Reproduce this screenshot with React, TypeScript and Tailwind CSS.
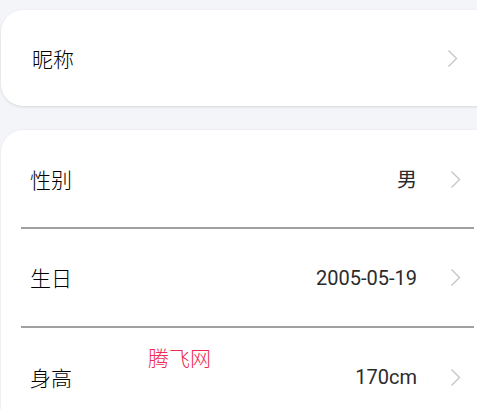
import React from "react";

const font = { fontFamily: 'Roboto, "Noto Sans CJK SC", sans-serif' };
const cjk = { fontFamily: '"Noto Sans CJK SC", sans-serif' };

function Chevron() {
  return (
    <svg width="11" height="19" viewBox="0 0 11 19" className="shrink-0">
      <polyline points="1.5,1.5 9.5,9.5 1.5,17.5" fill="none" stroke="#c6c6c6" strokeWidth="1.4" />
    </svg>
  );
}

function Row({ label, value, h }: { label: string; value: string; h: string }) {
  return (
    <div className={`flex items-center ${h} pl-[29px] pr-[16px]`}>
      <span className="text-[21px] text-black leading-none font-light" style={cjk}>
        {label}
      </span>
      <span className="ml-auto text-[20px] text-[#2b2b2b] leading-none">{value}</span>
      <span className="ml-[33px]">
        <Chevron />
      </span>
    </div>
  );
}

export default function App() {
  return (
    <div className="relative w-full h-[409px] overflow-hidden bg-[#f4f5f9] pt-[10px] pl-[1px]" style={font}>
      <div className="mr-[-20px] h-[96px] rounded-[22px] bg-white shadow-[0_1px_3px_rgba(0,0,0,0.12)] flex items-center pl-[31px] pr-[39px]">
        <span className="text-[21px] text-black leading-none font-light" style={cjk}>
          昵称
        </span>
        <span className="ml-auto">
          <Chevron />
        </span>
      </div>

      <div className="mt-[24px] mr-[-20px] pr-[20px] rounded-tl-[22px] bg-white shadow-[0_0_2px_rgba(0,0,0,0.08)] h-[400px]">
        <Row label="性别" value="男" h="h-[97px] pt-[2px]" />
        <div className="ml-[20px] mr-[3px] h-[2px] bg-[#a0a0a0]" />
        <Row label="生日" value="2005-05-19" h="h-[97px]" />
        <div className="ml-[20px] mr-[3px] h-[2px] bg-[#a0a0a0]" />
        <Row label="身高" value="170cm" h="h-[98px]" />
      </div>

      <div
        className="absolute left-[148px] top-[347px] text-[21px] leading-none text-[#ec2d50] font-light"
        style={cjk}
      >
        腾飞网
      </div>
    </div>
  );
}
